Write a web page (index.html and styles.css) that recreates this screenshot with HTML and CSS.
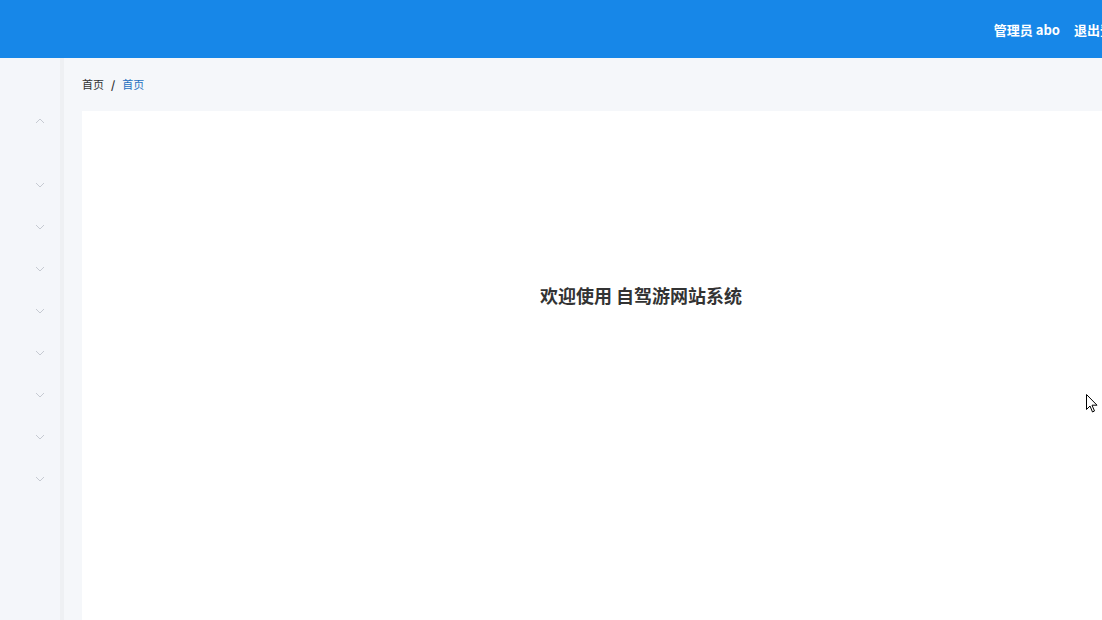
FILE: index.html
```html
<!DOCTYPE html>
<html lang="zh">
<head>
<meta charset="utf-8">
<title>自驾游网站系统</title>
<link rel="stylesheet" href="styles.css">
</head>
<body>
<div class="page">
  <header class="topbar">
    <div class="user-area">
      <span class="user">管理员 abo</span>
      <span class="logout">退出登录</span>
    </div>
  </header>
  <div class="body">
    <aside class="sidebar">
      <div class="menu-item"><svg class="chev" viewBox="0 0 10 6"><polyline points="1,5 5,1 9,5"/></svg></div>
      <div class="submenu"></div>
      <div class="menu-item"><svg class="chev" viewBox="0 0 10 6"><polyline points="1,1 5,5 9,1"/></svg></div>
      <div class="menu-item"><svg class="chev" viewBox="0 0 10 6"><polyline points="1,1 5,5 9,1"/></svg></div>
      <div class="menu-item"><svg class="chev" viewBox="0 0 10 6"><polyline points="1,1 5,5 9,1"/></svg></div>
      <div class="menu-item"><svg class="chev" viewBox="0 0 10 6"><polyline points="1,1 5,5 9,1"/></svg></div>
      <div class="menu-item"><svg class="chev" viewBox="0 0 10 6"><polyline points="1,1 5,5 9,1"/></svg></div>
      <div class="menu-item"><svg class="chev" viewBox="0 0 10 6"><polyline points="1,1 5,5 9,1"/></svg></div>
      <div class="menu-item"><svg class="chev" viewBox="0 0 10 6"><polyline points="1,1 5,5 9,1"/></svg></div>
      <div class="menu-item"><svg class="chev" viewBox="0 0 10 6"><polyline points="1,1 5,5 9,1"/></svg></div>
    </aside>
    <main class="main">
      <nav class="breadcrumb">
        <span class="crumb">首页</span>
        <span class="sep">/</span>
        <span class="crumb current">首页</span>
      </nav>
      <section class="panel">
        <h1 class="welcome">欢迎使用 自驾游网站系统</h1>
      </section>
    </main>
  </div>
</div>
<svg class="cursor" viewBox="0 0 12 19" width="12" height="19"><path d="M0.5,0.5 L0.5,15.5 L4,12 L6.5,18 L8.5,17 L6,11.2 L11,11.2 Z" fill="#fff" stroke="#000" stroke-width="1"/></svg>
</body>
</html>
```

FILE: styles.css
```css
html, body {
  margin: 0;
  padding: 0;
  overflow: hidden;
  background: #f5f7fa;
}
body {
  font-family: "Noto Sans CJK SC", "Noto Sans", sans-serif;
  color: #303133;
}
.page {
  width: 1200px;
  height: 620px;
  display: flex;
  flex-direction: column;
}
.topbar {
  height: 58px;
  flex: none;
  background: #1787e8;
  display: flex;
  align-items: center;
  justify-content: flex-end;
  padding-right: 74px;
}
.user-area {
  display: flex;
  gap: 14px;
  color: #fff;
  font-size: 13px;
  font-weight: 600;
}
.body {
  flex: 1;
  display: flex;
  min-height: 0;
}
.sidebar {
  width: 60px;
  flex: none;
  background: #f4f6fa;
  border-right: 4px solid #eef0f3;
  padding-top: 41px;
  box-sizing: content-box;
}
.menu-item {
  height: 42px;
  display: flex;
  align-items: center;
  justify-content: flex-end;
  padding-right: 15px;
}
.menu-item:first-child {
  padding-top: 1px;
}
.submenu {
  height: 22px;
}
.chev {
  width: 10px;
  height: 6px;
  fill: none;
  stroke: #c6cad2;
  stroke-width: 1;
}
.main {
  flex: 1;
  display: flex;
  flex-direction: column;
  padding-left: 18px;
  background: #f5f7fa;
}
.breadcrumb {
  height: 53px;
  display: flex;
  align-items: center;
  font-size: 11px;
  flex: none;
  padding-bottom: 1px;
  box-sizing: border-box;
}
.crumb {
  color: #303133;
}
.crumb.current {
  color: #1f6fc0;
}
.sep {
  margin: 0 7px;
  font-weight: 700;
  color: #303133;
}
.panel {
  flex: 1;
  background: #fff;
  text-align: center;
  padding-top: 172px;
}
.welcome {
  margin: 0;
  font-size: 18px;
  line-height: 24px;
  font-weight: 700;
  color: #333;
}
.cursor {
  position: absolute;
  left: 1086px;
  top: 394px;
}
```
